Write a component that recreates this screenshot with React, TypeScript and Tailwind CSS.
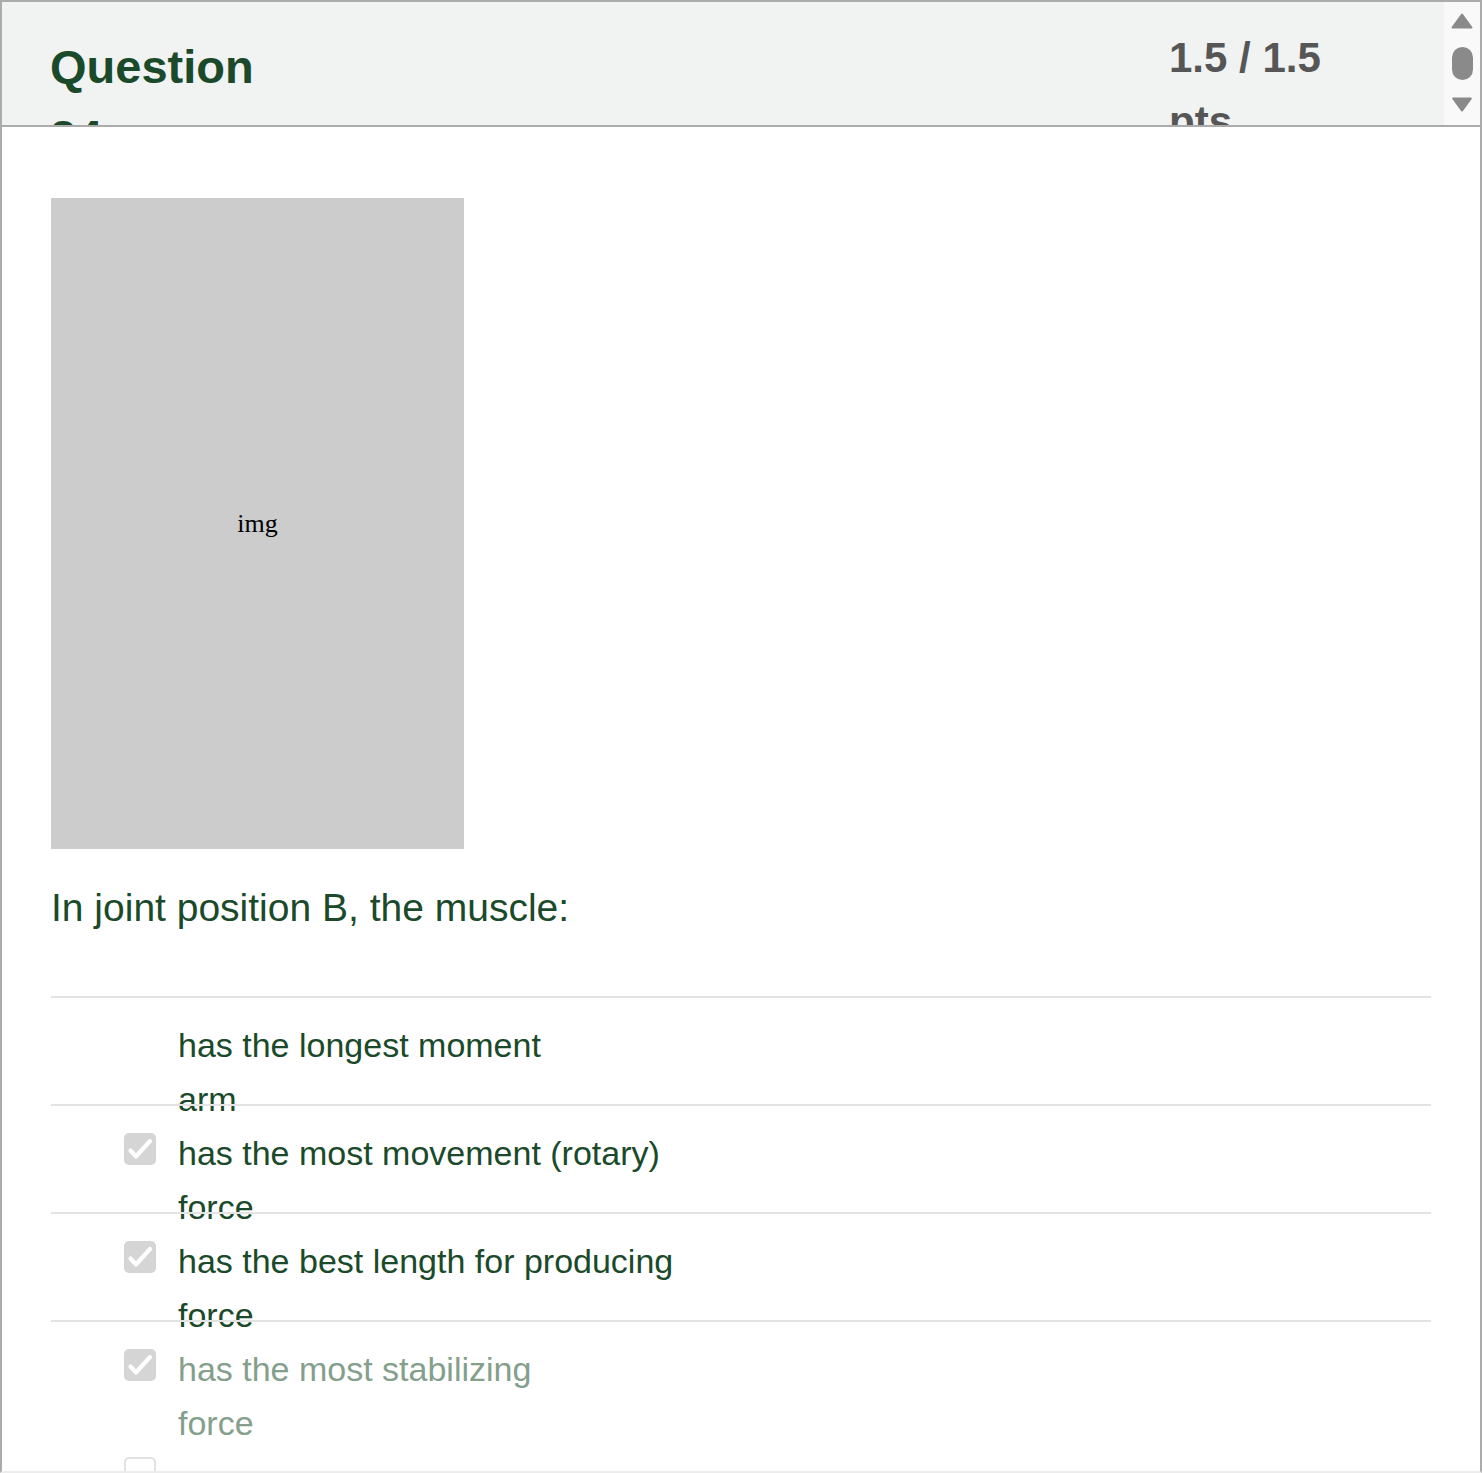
const green = "text-[#1b4a2b]";

type Answer = {
  lines: string[];
  checked?: boolean;
  showBox: boolean;
  muted?: boolean;
  divider: boolean;
};

const answers: Answer[] = [
  { lines: ["has the longest moment", "arm"], showBox: false, divider: true },
  { lines: ["has the most movement (rotary)", "force"], showBox: true, checked: true, divider: true },
  { lines: ["has the best length for producing", "force"], showBox: true, checked: true, divider: true },
  { lines: ["has the most stabilizing", "force"], showBox: true, checked: true, muted: true, divider: true },
  { lines: [""], showBox: true, checked: false, divider: false },
];

function CheckBox({ checked }: { checked?: boolean }) {
  if (!checked) {
    return <span className="block h-[32px] w-[32px] rounded-[5px] border-2 border-[#e2e2e2] bg-white" />;
  }
  return (
    <span className="flex h-[32px] w-[32px] items-center justify-center rounded-[5px] bg-[#d5d5d5]">
      <svg viewBox="0 0 32 32" width="32" height="32" fill="none">
        <path d="M6.5 17.5l5.5 6 14-15.5" stroke="#fff" strokeWidth="4.2" strokeLinecap="round" strokeLinejoin="round" />
      </svg>
    </span>
  );
}

function ScrollBar() {
  return (
    <div className="flex w-[36px] shrink-0 flex-col items-center bg-[#f9f9f9]">
      {/* up arrow */}
      <svg className="mt-[11px]" viewBox="0 0 22 16" width="22" height="16">
        <path d="M11 1.5L20.5 14.5H1.5Z" fill="#8a8a8a" stroke="#8a8a8a" strokeWidth="2" strokeLinejoin="round" />
      </svg>
      {/* thumb */}
      <span className="mt-[18px] block h-[33px] w-[21px] rounded-full bg-[#8a8a8a]" />
      {/* down arrow */}
      <svg className="mt-[17px]" viewBox="0 0 22 16" width="22" height="15">
        <path d="M11 14.5L20.5 1.5H1.5Z" fill="#8a8a8a" stroke="#8a8a8a" strokeWidth="2" strokeLinejoin="round" />
      </svg>
    </div>
  );
}

export default function App() {
  return (
    <div
      className="h-[1473px] w-[1482px] overflow-hidden border-x-2 border-t-2 border-b-2 border-x-[#ababab] border-t-[#ababab] border-b-[#ececec] bg-white"
      style={{ fontFamily: '"Liberation Sans", Arial, sans-serif' }}
    >
      {/* header */}
      <div className="flex h-[125px] border-b-2 border-[#ababab] bg-[#f1f2f2]">
        <div className="flex h-[123px] flex-1 items-start overflow-hidden pl-[48px] pr-[85px] pt-[24px]">
          <h2 className={`mt-[6px] w-[230px] text-[47px] font-bold leading-[70px] ${green}`}>Question 24</h2>
          <div className="ml-auto w-[190px] text-[42px] font-bold leading-[64px] text-[#565656]">1.5 / 1.5 pts</div>
        </div>
        <ScrollBar />
      </div>

      {/* body */}
      <div className="px-[49px] pt-[71px]">
        <div className="flex h-[651px] w-[413px] items-center justify-center bg-[#cccccc]">
          <span className="text-[26px] text-black" style={{ fontFamily: '"Liberation Serif", serif' }}>
            img
          </span>
        </div>

        <p className={`mt-[36px] text-[39px] leading-[45px] ${green}`}>In joint position B, the muscle:</p>

        <div className="mt-[66px]">
          {answers.map((a, i) => (
            <div
              key={i}
              className={`relative flex h-[108px] pl-[73px] ${
                a.divider ? "border-t-2 border-[#e3e3e3] pt-[20px]" : "pt-[22px]"
              }`}
            >
              <div className="mt-[7px] w-[32px] shrink-0">{a.showBox && <CheckBox checked={a.checked} />}</div>
              <div
                className={`ml-[22px] text-[34px] leading-[54px] ${a.muted ? "text-[#84a08c]" : "text-[#1b4a2b]"}`}
              >
                {a.lines.map((l, j) => (
                  <div key={j} className="whitespace-nowrap">
                    {l}
                  </div>
                ))}
              </div>
            </div>
          ))}
        </div>
      </div>
    </div>
  );
}
